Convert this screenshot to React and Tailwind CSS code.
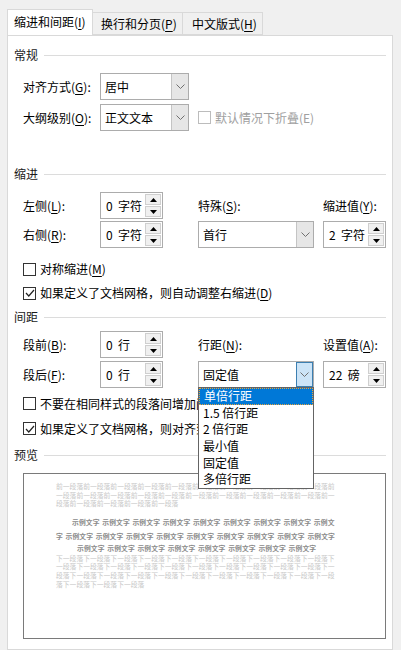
import React from "react";

const FONT = { fontFamily: '"Noto Sans CJK SC", "Noto Sans", sans-serif' };

const Key = ({ text, k, colon = true }) => (
  <span>
    {text}(<span className="underline underline-offset-2">{k}</span>){colon ? ":" : ""}
  </span>
);

const Chevron = () => (
  <svg width="9" height="5" viewBox="0 0 9 5">
    <polyline points="0.5,0.5 4.5,4.5 8.5,0.5" fill="none" stroke="#707070" strokeWidth="1" />
  </svg>
);

const Tri = ({ up }) => (
  <svg width="7" height="4" viewBox="0 0 7 4">
    <polygon points={up ? "0,4 7,4 3.5,0" : "0,0 7,0 3.5,4"} fill="#000" />
  </svg>
);

const Spinner = ({ value }) => (
  <div className="flex h-[27px] w-[63px] border border-[#acacac] bg-white">
    <div className="flex flex-1 items-center whitespace-pre pl-[5px] text-[12px] text-black">{value}</div>
    <div className="flex w-[17px] flex-col gap-[1px] py-[1px] pr-[1px]">
      <div className="flex flex-1 items-center justify-center border border-[#cfcfcf] bg-[#f0f0f0]">
        <Tri up />
      </div>
      <div className="flex flex-1 items-center justify-center border border-[#cfcfcf] bg-[#f0f0f0]">
        <Tri />
      </div>
    </div>
  </div>
);

const Select = ({ value, w, active, children }) => (
  <div className={`relative flex h-[27px] border border-[#acacac] bg-white ${w}`}>
    <div className="flex flex-1 items-center pl-[4px] text-[12px] text-black">{value}</div>
    <div
      className={`flex w-[17px] items-center justify-center border-l ${
        active ? "border border-[#3c7fb1] bg-[#cce4f7]" : "border-[#c4c4c4] bg-[#e6e6e6]"
      }`}
    >
      <Chevron />
    </div>
    {children}
  </div>
);

const CheckBox = ({ checked, disabled }) => (
  <div
    className={`flex h-[13px] w-[13px] shrink-0 items-center justify-center border bg-white ${
      disabled ? "border-[#bcbcbc]" : "border-[#333333]"
    }`}
  >
    {checked && (
      <svg width="10" height="8" viewBox="0 0 10 8">
        <polyline points="1,4 3.8,7 9,1" fill="none" stroke="#222" strokeWidth="1.2" />
      </svg>
    )}
  </div>
);

const Section = ({ title, className }) => (
  <div className={`flex h-[16px] items-center gap-[6px] ${className}`}>
    <span className="text-[12px] leading-none text-[#1a1a1a]">{title}</span>
    <div className="h-px flex-1 bg-[#dcdcdc]" />
  </div>
);

const LineSpacingMenu = () => {
  const items = ["单倍行距", "1.5 倍行距", "2 倍行距", "最小值", "固定值", "多倍行距"];
  return (
    <div className="absolute left-[-1px] top-[25px] z-10 w-[116px] border border-[#646464] bg-white">
      {items.map((t, i) => (
        <div
          key={t}
          className={`flex h-[16.6px] items-center px-[4px] text-[12px] ${
            i === 0 ? "border border-dotted border-[#e6a33c] bg-[#0078d7] text-white" : "text-black"
          }`}
        >
          {t}
        </div>
      ))}
    </div>
  );
};

const rep = (unit, start, len) => {
  let s = "";
  while (s.length < start + len) s += unit;
  return s.slice(start, start + len);
};

const Preview = () => {
  const before = [rep("前一段落", 0, 41), rep("前一段落", 41, 41), rep("前一段落", 82, 18)];
  const after = [rep("下一段落", 0, 41), rep("下一段落", 41, 41), rep("下一段落", 82, 41), rep("下一段落", 123, 13)];
  const s = "示例文字 ";
  return (
    <div className="ml-[9px] mt-[10px] h-[166px] w-[363px] border border-[#7a7a7a] bg-white pl-[32px] pt-[8px]">
      <div className="text-[6.8px] leading-[8.5px] text-[#c8c8c8]">
        {before.map((l, i) => (
          <div key={i} className="whitespace-nowrap">{l}</div>
        ))}
      </div>
      <div className="mt-[7px] text-[6.8px] font-bold leading-[14px] tracking-[0.1px] text-[#8a8a8a] [word-spacing:1px]">
        <div className="whitespace-pre pl-[16px]">{s.repeat(8) + "示例文"}</div>
        <div className="whitespace-pre">{"字 " + s.repeat(9)}</div>
        <div className="whitespace-pre pl-[21px] leading-[11px]">{s.repeat(8)}</div>
      </div>
      <div className="text-[6.8px] leading-[8.7px] text-[#c8c8c8]">
        {after.map((l, i) => (
          <div key={i} className="whitespace-nowrap">{l}</div>
        ))}
      </div>
    </div>
  );
};

export default function App() {
  return (
    <div className="flex h-[650px] w-[401px] flex-col overflow-hidden bg-[#f0f0f0] pl-[7px] pt-[10px] text-[12px] text-black" style={FONT}>
      {/* tabs */}
      <div className="relative z-10 flex h-[25px] items-end">
        <div className="flex h-[26px] w-[86px] items-center border border-b-0 border-[#d9d9d9] bg-white pl-[6px] pb-[1px]">
          <Key text="缩进和间距" k="I" colon={false} />
        </div>
        <div className="flex h-[23px] w-[90px] items-center border border-l-0 border-[#d9d9d9] bg-[#f0f0f0] pl-[8px]">
          <Key text="换行和分页" k="P" colon={false} />
        </div>
        <div className="flex h-[23px] w-[80px] items-center border border-l-0 border-[#d9d9d9] bg-[#f0f0f0] pl-[9px]">
          <Key text="中文版式" k="H" colon={false} />
        </div>
      </div>

      {/* panel */}
      <div className="flex w-[386px] flex-1 flex-col border border-[#d9d9d9] bg-white pl-[6px] pr-[6px]">
        <Section title="常规" className="mt-[11px]" />
        <div className="mt-[10px] flex h-[27px] items-center pl-[9px]">
          <div className="w-[77px]"><Key text="对齐方式" k="G" /></div>
          <Select value="居中" w="w-[89px]" />
        </div>
        <div className="mt-[4px] flex h-[27px] items-center pl-[9px]">
          <div className="w-[77px]"><Key text="大纲级别" k="O" /></div>
          <Select value="正文文本" w="w-[89px]" />
          <div className="ml-[9px] flex items-center gap-[4px] text-[#a0a0a0]">
            <CheckBox disabled />
            <span>默认情况下折叠(E)</span>
          </div>
        </div>

        <Section title="缩进" className="mt-[35px]" />
        <div className="mt-[10px] flex h-[27px] items-center pl-[9px]">
          <div className="w-[77px]"><Key text="左侧" k="L" /></div>
          <Spinner value="0  字符" />
          <div className="ml-[35px] w-[125px] pt-[1px]"><Key text="特殊" k="S" /></div>
          <div className="pt-[1px]"><Key text="缩进值" k="Y" /></div>
        </div>
        <div className="mt-[2px] flex h-[27px] items-center pl-[9px]">
          <div className="w-[77px]"><Key text="右侧" k="R" /></div>
          <Spinner value="0  字符" />
          <div className="ml-[35px]"><Select value="首行" w="w-[116px]" /></div>
          <div className="ml-[9px]"><Spinner value="2  字符" /></div>
        </div>
        <div className="mt-[9px] flex h-[24px] items-center gap-[4px] pl-[9px]">
          <CheckBox />
          <Key text="对称缩进" k="M" colon={false} />
        </div>
        <div className="flex h-[24px] items-center gap-[4px] pl-[9px]">
          <CheckBox checked />
          <Key text="如果定义了文档网格，则自动调整右缩进" k="D" colon={false} />
        </div>

        <Section title="间距" className="mt-[4px]" />
        <div className="mt-[6px] flex h-[27px] items-center pl-[9px]">
          <div className="w-[77px]"><Key text="段前" k="B" /></div>
          <Spinner value="0  行" />
          <div className="ml-[35px] w-[125px] pt-[1px]"><Key text="行距" k="N" /></div>
          <div className="pt-[1px]"><Key text="设置值" k="A" /></div>
        </div>
        <div className="relative z-10 mt-[3px] flex h-[27px] items-center pl-[9px]">
          <div className="w-[77px]"><Key text="段后" k="F" /></div>
          <Spinner value="0  行" />
          <div className="ml-[35px]">
            <Select value="固定值" w="w-[116px]" active>
              <LineSpacingMenu />
            </Select>
          </div>
          <div className="ml-[9px]"><Spinner value="22  磅" /></div>
        </div>
        <div className="mt-[3px] flex h-[25px] items-center gap-[4px] pl-[9px]">
          <CheckBox />
          <span className="whitespace-nowrap">不要在相同样式的段落间增加间距(C)</span>
        </div>
        <div className="flex h-[25px] items-center gap-[4px] pl-[9px]">
          <CheckBox checked />
          <span className="whitespace-nowrap">如果定义了文档网格，则对齐到网格(W)</span>
        </div>

        <Section title="预览" className="mt-[6px]" />
        <Preview />
      </div>
    </div>
  );
}
